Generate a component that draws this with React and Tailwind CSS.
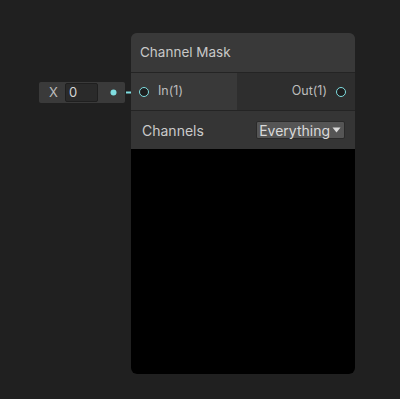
const App = () => {
  return (
    <div
      className="relative w-[400px] h-[399px] overflow-hidden bg-[#202020]"
      style={{ fontFamily: "Inter, 'Noto Sans', sans-serif" }}
    >
      {/* inline value field */}
      <div className="absolute left-[39px] top-[82px] w-[86px] h-[21px] bg-[#3a3a3a] rounded-[2px] flex items-center">
        <span className="ml-[10px] w-[16px] text-[13px] text-[#bdbdbd]">X</span>
        <div className="w-[33px] h-[19px] bg-[#2a2a2a] border border-[#1f1f1f] rounded-[2px] flex items-center pl-[3px] text-[13px] text-[#d4d4d4]">
          0
        </div>
      </div>

      {/* edge */}
      <svg className="absolute left-[108px] top-[86px]" width="44" height="14" viewBox="0 0 44 14">
        <circle cx="5.5" cy="6.5" r="3" fill="#7fdde0" />
        <line x1="18" y1="6.5" x2="23" y2="6.5" stroke="#7fdde0" strokeWidth="2" />
        <line x1="25" y1="6.5" x2="32" y2="6.5" stroke="#5fa9ab" strokeWidth="2" />
      </svg>

      {/* node */}
      <div className="absolute left-[131px] top-[33px] w-[224px] h-[341px] rounded-[6px] overflow-hidden flex flex-col bg-[#2e2e2e]">
        <div className="h-[40px] shrink-0 bg-[#393939] border-b border-[#242424] flex items-center px-[9px] text-[13.5px] text-[#c8c8c8]">
          Channel Mask
        </div>
        <div className="h-[38px] shrink-0 flex border-b border-[#242424]">
          <div className="w-[106px] bg-[#393939] flex items-center relative">
            <span className="ml-[8px] w-[10px] h-[10px] rounded-full border-[1.6px] border-[#7fdde0] bg-[#1e1e1e]" />
            <span className="ml-[9px] text-[12.5px] text-[#bcbcbc]">In(1)</span>
          </div>
          <div className="flex-1 bg-[#2e2e2e] flex items-center justify-end">
            <span className="text-[12.5px] text-[#bcbcbc]">Out(1)</span>
            <span className="ml-[9px] mr-[9px] w-[10px] h-[10px] rounded-full border-[1.6px] border-[#7fdde0] bg-[#1e1e1e]" />
          </div>
        </div>
        <div className="h-[38px] shrink-0 bg-[#353535] flex items-center justify-between pl-[11px] pr-[10px]">
          <span className="text-[14px] text-[#cacaca]">Channels</span>
          <div className="h-[18px] bg-[#555555] border border-[#2a2a2a] rounded-[2px] flex items-center pl-[2px] pr-[3px] text-[14px] text-[#dadada]">
            Everything
            <svg width="9" height="6" viewBox="0 0 9 6" className="ml-[2px]">
              <path d="M0.5 0.5 L8.5 0.5 L4.5 5.5 Z" fill="#dadada" />
            </svg>
          </div>
        </div>
        <div className="flex-1 bg-black" />
      </div>
    </div>
  );
};

export default App;
